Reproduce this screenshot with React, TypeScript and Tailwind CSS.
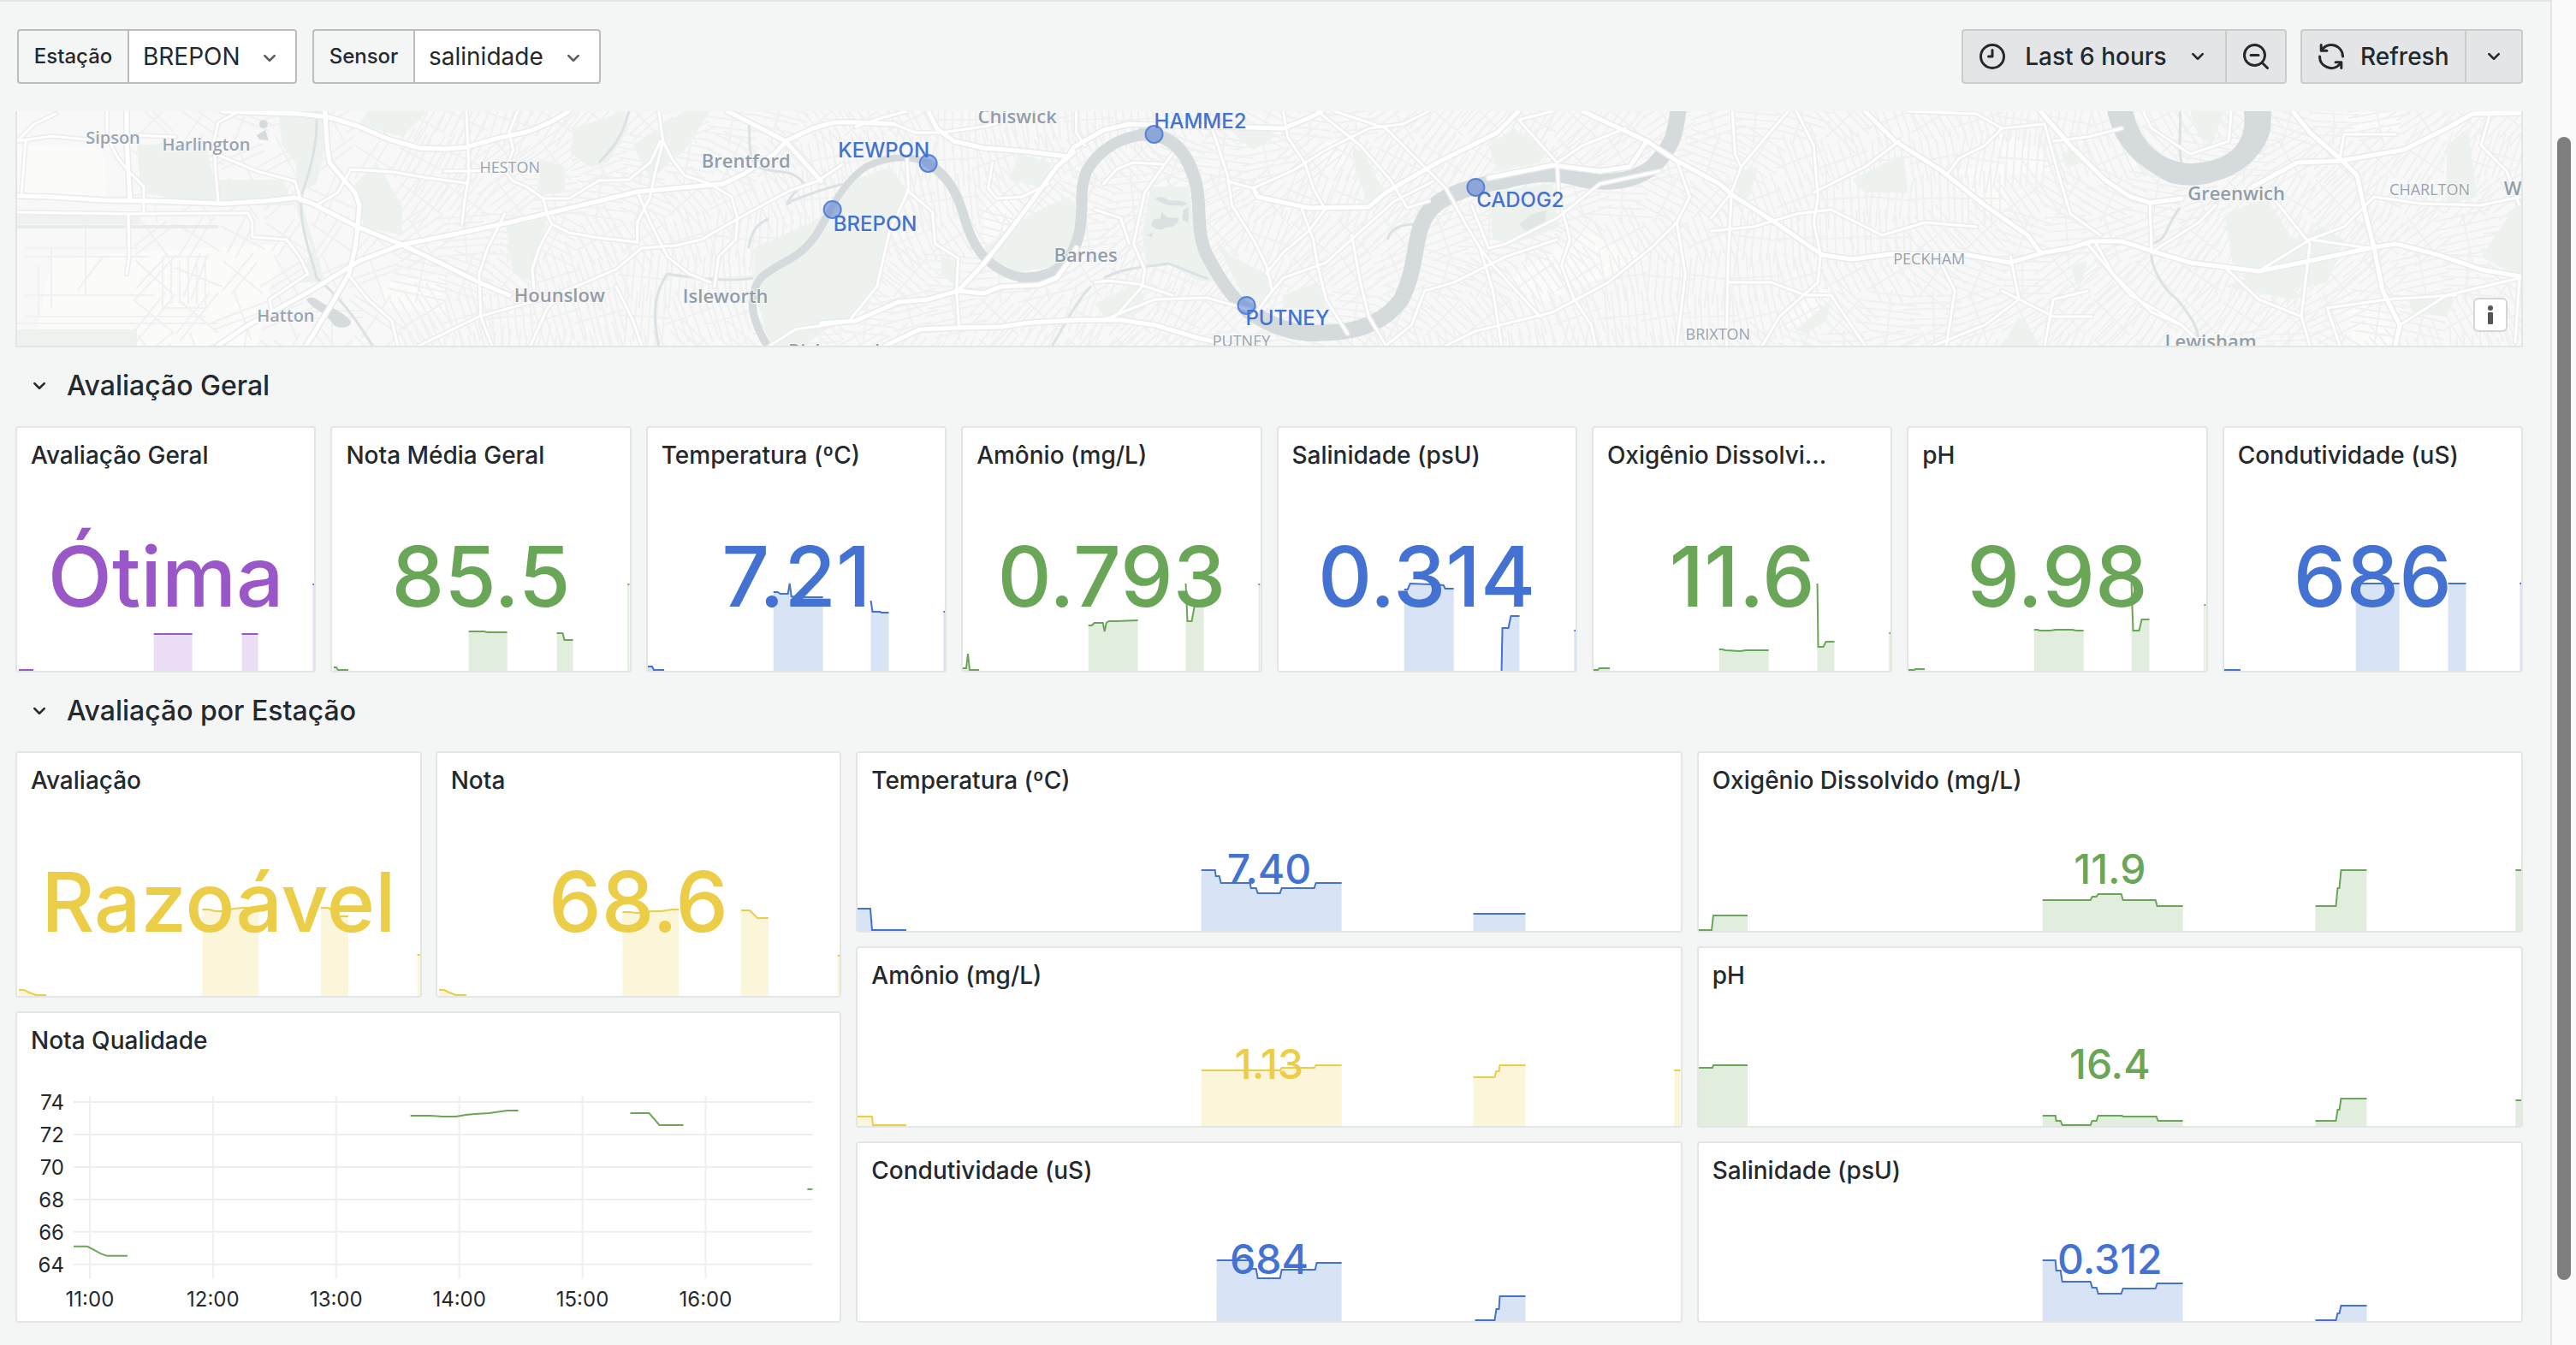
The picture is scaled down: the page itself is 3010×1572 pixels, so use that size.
import type { ReactNode } from 'react';

type Tone = 'blue' | 'green' | 'yellow' | 'purple';
type Point = [number, number];

const TONES: Record<Tone, { line: string; fill: string; text: string }> = {
  blue: { line: '#4472d2', fill: '#d8e3f5', text: 'text-[#4472d2]' },
  green: { line: '#6aa658', fill: '#e1eddd', text: 'text-[#6aa658]' },
  yellow: { line: '#ebcd48', fill: '#fbf5da', text: 'text-[#ebcd48]' },
  purple: { line: '#9a57c8', fill: '#ebddf4', text: 'text-[#9a57c8]' },
};

/* ---------- icons ---------- */

const ICONS = {
  angleDown:
    'M17,9.17a1,1,0,0,0-1.41,0L12,12.71,8.46,9.17a1,1,0,0,0-1.41,0,1,1,0,0,0,0,1.42l4.24,4.24a1,1,0,0,0,1.42,0L17,10.59A1,1,0,0,0,17,9.17Z',
  clock:
    'M12,2A10,10,0,1,0,22,12,10,10,0,0,0,12,2Zm0,18a8,8,0,1,1,8-8A8,8,0,0,1,12,20ZM12,6a1,1,0,0,0-1,1v4H9a1,1,0,0,0,0,2h3a1,1,0,0,0,1-1V7A1,1,0,0,0,12,6Z',
  zoomOut:
    'M21.71,20.29,18,16.61A9,9,0,1,0,16.61,18l3.68,3.68a1,1,0,0,0,1.42,0A1,1,0,0,0,21.71,20.29ZM11,18a7,7,0,1,1,7-7A7,7,0,0,1,11,18ZM14,10H8a1,1,0,0,0,0,2h6a1,1,0,0,0,0-2Z',
  sync: 'M19.91,15.51H15.38a1,1,0,0,0,0,2h2.4A8,8,0,0,1,4,12a1,1,0,0,0-2,0,10,10,0,0,0,16.88,7.23V21a1,1,0,0,0,2,0V16.5A1,1,0,0,0,19.91,15.51ZM12,2A10,10,0,0,0,5.12,4.77V3a1,1,0,0,0-2,0V7.5a1,1,0,0,0,1,1h4.5a1,1,0,0,0,0-2H6.22A8,8,0,0,1,20,12a1,1,0,0,0,2,0A10,10,0,0,0,12,2Z',
};

function Icon({ name, className }: { name: keyof typeof ICONS; className: string }) {
  return (
    <svg viewBox="0 0 24 24" fill="currentColor" aria-hidden="true" className={`shrink-0 ${className}`}>
      <path d={ICONS[name]} />
    </svg>
  );
}

/* ---------- toolbar ---------- */

interface VariableProps {
  id: string;
  label: string;
  options: string[];
  labelWidth: string;
  width: string;
}

function Variable({ id, label, options, labelWidth, width }: VariableProps) {
  return (
    <div className="flex h-16">
      <label
        htmlFor={id}
        className={`${labelWidth} flex items-center justify-center rounded-l-[4px] border-2 border-r-0 border-[#bcbebe] text-[24px] font-medium`}
      >
        {label}
      </label>
      <div className="relative flex">
        <select
          id={id}
          className={`${width} appearance-none rounded-r-[4px] border-2 border-[#bcbebe] bg-white pl-4 text-[28px] text-[#24292e]`}
        >
          {options.map((o) => (
            <option key={o}>{o}</option>
          ))}
        </select>
        <Icon name="angleDown" className="pointer-events-none absolute top-[18px] right-4 size-8 text-[#5a5e62]" />
      </div>
    </div>
  );
}

function ToolButton({ children, className, label }: { children: ReactNode; className: string; label?: string }) {
  return (
    <button
      type="button"
      aria-label={label}
      className={`flex h-16 items-center border-2 border-[#cbcdcd] bg-[#e4e5e6] text-[28px] font-medium ${className}`}
    >
      {children}
    </button>
  );
}

function Toolbar() {
  return (
    <div className="flex items-center justify-between pt-8 pb-8">
      <div className="flex gap-[18px] pl-[2px]">
        <Variable
          id="estacao"
          label="Estação"
          options={['BREPON', 'KEWPON', 'PUTNEY']}
          labelWidth="w-[129px]"
          width="w-[198px]"
        />
        <Variable
          id="sensor"
          label="Sensor"
          options={['salinidade', 'temperatura']}
          labelWidth="w-[118px]"
          width="w-[219px]"
        />
      </div>
      <div className="flex gap-4">
        <div className="flex">
          <ToolButton className="w-[308px] justify-between rounded-l-[4px] border-r-0 px-4">
            <Icon name="clock" className="size-9" />
            Last 6 hours
            <Icon name="angleDown" className="size-8" />
          </ToolButton>
          <ToolButton className="w-[72px] justify-center rounded-r-[4px]" label="Zoom out">
            <Icon name="zoomOut" className="size-9" />
          </ToolButton>
        </div>
        <div className="flex">
          <ToolButton className="w-[192px] gap-4 rounded-l-[4px] border-r-0 px-4">
            <Icon name="sync" className="size-9" />
            Refresh
          </ToolButton>
          <ToolButton className="w-[68px] justify-center rounded-r-[4px]" label="Refresh interval">
            <Icon name="angleDown" className="size-8" />
          </ToolButton>
        </div>
      </div>
    </div>
  );
}

/* ---------- map ---------- */

const MAJOR_ROADS = [
  '260,130 350,133 385,137 420,148 455,163 490,173 520,174 545,172 580,162 620,153 645,142 665,130',
  '20,229 60,230 120,234 180,235 260,238 310,235 345,231 365,238 420,266 470,286 520,310 560,330 595,345',
  '255,404 290,380 360,342 420,305 470,286 530,274 600,259 650,247 700,235 745,224 800,219 845,215 870,203 905,180 920,164 950,150 975,143 1000,143 1045,145',
  '380,130 382,165 385,190 400,208 415,225 420,240 418,266 415,290 408,320 385,360 358,404',
  '850,130 880,145 905,158 918,165 945,195 960,212',
  '148,130 148,165 150,200 152,233',
  '1085,130 1095,150 1115,165 1150,173 1200,177 1248,183 1255,172 1290,152 1320,145 1380,147 1420,148 1500,150 1530,138 1545,130',
  '960,378 1000,375 1050,353 1085,350 1120,340 1150,343 1170,335 1215,333 1235,325 1250,305 1258,290',
  '1120,340 1150,308 1180,270 1210,230 1235,195 1255,178',
  '1035,404 1075,385 1120,383 1170,382 1205,377 1260,374 1310,374 1350,380 1400,395 1440,404',
  '1740,208 1815,193 1870,200 1905,195 1925,165',
  '1850,130 1925,165 1960,188 2010,215 2025,228 2075,260 2130,298 2165,303 2210,297 2300,298 2350,307 2390,295 2420,290 2445,282 2480,282 2520,295 2560,307 2600,312 2640,317 2690,307 2770,290 2800,285 2850,298 2900,315 2945,323',
  '2180,130 2215,165 2270,200 2320,240 2370,275 2385,295',
  '2385,130 2420,170 2460,210 2490,230 2513,237 2550,232',
  '2630,220 2685,190 2735,188 2810,175 2860,150 2890,133 2948,132',
  '2680,130 2700,155 2735,185 2755,205 2765,250 2775,290 2785,340 2805,380 2800,404',
  '1465,220 1470,230 1530,243 1600,242 1620,225 1680,190 1750,155 1775,130',
];

const MINOR_ROADS = [
  '125,130 125,160 138,185 150,200 168,218 168,248',
  '20,248 150,250 290,249 295,260 295,277 335,280 350,300 360,320 315,350 318,365',
  '280,130 255,143 250,165 252,200 255,235',
  '252,180 300,200 345,212 352,235',
  '20,165 60,159 100,163 160,158 205,160',
  '20,165 40,145 65,133',
  '25,229 28,190 30,165',
  '150,250 151,300 148,320',
  '410,198 460,201 500,208 545,214',
  '545,130 547,170 548,205 543,235 540,262',
  '605,130 595,155 600,175 590,200 600,212 615,218 635,232 640,252 645,262 630,290 622,315 625,345 645,355',
  '490,404 560,370 640,348 680,332 720,315 750,290 790,287 820,280 860,257 900,235 925,222 955,212 985,192',
  '770,130 775,165 785,185 800,205 830,215 855,230 862,255 860,280 840,300 835,335',
  '590,250 570,290 560,320 562,370 575,404',
  '520,200 545,200 600,198',
  '635,232 665,232 700,211 735,210 760,190 772,165',
  '645,262 665,272 700,278 745,283',
  '745,283 745,260 760,230 765,205 775,165',
  '745,224 760,260 780,300 805,320 830,330',
  '410,325 430,350 458,375 465,404',
  '750,404 740,375 720,335',
  '620,404 640,360 650,350',
  '410,198 395,225 370,240',
  '900,404 930,385 985,377',
  '1000,148 1030,138 1060,130',
  '1045,145 1070,155 1100,155 1150,148 1200,135',
  '1060,222 1090,248 1093,285 1120,302 1118,340 1121,382',
  '1060,185 1062,222 1040,270 1025,335 995,372',
  '1300,374 1335,335 1338,315 1325,285 1338,225 1370,180',
  '1258,130 1258,155 1268,170',
  '1160,190 1155,220 1165,232 1195,230 1225,215',
  '1290,215 1305,198 1325,190 1360,192',
  '1280,245 1310,255 1320,285',
  '1410,130 1420,160 1435,205 1440,240 1465,280 1480,310 1487,340 1465,370',
  '1435,212 1465,220 1510,200 1550,175 1600,150 1640,145 1670,130',
  '1540,130 1590,170 1625,210 1645,243 1670,235',
  '1560,130 1620,150 1660,190 1690,220 1715,265 1730,290 1745,340 1755,404',
  '1550,243 1530,270 1500,295 1480,320',
  '1487,340 1500,325 1550,307 1585,275 1630,235 1675,212',
  '1500,130 1505,160 1525,190 1535,220 1548,243',
  '1690,404 1725,387 1815,365 1880,330 1930,290 1960,260 1975,230 1960,188',
  '1815,130 1775,140 1820,190 1822,230 1830,260 1835,280 1825,310 1840,350 1860,380 1865,404',
  '1580,275 1590,330 1600,370 1620,404',
  '1520,240 1535,280 1540,310 1550,350 1575,390',
  '1620,404 1650,380 1665,340 1700,330 1760,300 1820,280',
  '1730,290 1745,310 1800,370',
  '1960,260 1970,320 1960,404',
  '1900,150 1850,170 1820,190',
  '1290,374 1350,350 1410,348 1460,362',
  '1280,330 1295,328 1330,332 1370,345',
  '1720,240 1740,290 1760,285 1820,255 1870,215 1940,200',
  '2024,225 2035,195 2060,165 2090,130',
  '2025,130 2028,180 2035,195',
  '2000,255 2024,225 2020,300 2018,404',
  '2100,130 2120,170 2125,230 2120,260 2128,297 2125,330 2080,370 2060,404',
  '2230,130 2310,133 2340,150 2320,170 2290,185 2275,205',
  '2260,404 2320,380 2360,350 2350,300',
  '2513,237 2515,295 2530,285 2570,260 2590,240',
  '2440,285 2490,345 2550,380 2575,404',
  '2450,285 2470,320 2515,365 2550,380',
  '2120,225 2180,195 2220,165',
  '2000,270 2050,265 2100,250 2140,245 2200,275 2250,260 2310,265',
  '2020,330 2070,330 2110,345 2140,345 2180,404',
  '2270,310 2285,340 2275,404',
  '2340,340 2400,370 2445,370',
  '2340,150 2390,145 2405,200 2420,250 2455,275',
  '2505,130 2515,150 2560,180 2605,165 2608,130',
  '2735,185 2740,157 2800,157',
  '2700,280 2740,265 2775,230 2830,238 2900,240 2945,230',
  '2600,312 2640,350 2690,370 2700,404',
  '2660,235 2700,285 2690,370',
  '2640,317 2700,280 2770,290',
  '2805,380 2860,345 2945,325',
  '2735,404 2720,360 2790,350 2870,345',
  '2910,135 2900,170 2930,200 2945,240',
  '2940,400 2945,325',
  '2480,150 2440,160 2400,165',
  '2390,404 2400,350 2440,340',
];

const PARKS = [
  '325,130 378,130 380,170 370,215 350,225 345,190 330,170',
  '160,170 240,165 250,210 330,210 345,240 250,240 165,225',
  '20,250 160,250 165,262 20,262',
  '20,385 160,385 160,404 20,404',
  '345,232 352,235 380,330 350,330 365,290 350,255',
  '415,215 440,190 470,240 470,275 425,265',
  '430,130 500,130 470,160 420,145',
  '630,185 660,195 660,225 630,228',
  '670,150 730,130 735,150 710,190 690,195 668,180',
  '740,170 800,130 830,130 800,175 760,210',
  '590,255 640,250 625,330 600,320',
  '880,290 960,255 1000,210 1040,195 1058,220 1040,270 1025,335 990,375 920,404 900,404 885,350',
  '960,250 990,245 1000,260 1005,330 985,370 940,404 905,404 900,330 930,300',
  '1150,290 1215,245 1250,230 1262,250 1258,290 1230,312 1190,318 1165,305',
  '1100,300 1120,305 1118,335 1100,320',
  '1190,180 1230,190 1220,220 1180,210',
  '1345,218 1390,218 1398,290 1425,330 1400,328 1370,310 1340,310 1335,275',
  '1280,355 1330,330 1340,360 1300,380',
  '1420,280 1440,300 1480,320 1485,355 1455,350',
  '1500,345 1540,330 1550,360 1500,360',
  '1580,170 1595,180 1620,230 1600,240 1585,200',
  '1740,225 1815,215 1822,265 1770,285 1745,280',
  '1740,170 1770,150 1810,175 1800,190 1750,200',
  '1440,155 1470,145 1490,160 1465,175',
  '2165,210 2225,180 2230,225 2180,225',
  '2030,200 2055,195 2045,230 2030,235',
  '2600,250 2650,232 2680,280 2715,265 2740,280 2720,330 2650,345 2610,310',
  '2600,335 2640,320 2690,345 2680,350',
  '2860,170 2885,150 2895,230 2860,240',
  '2900,300 2948,230 2948,325',
  '2340,404 2360,370 2385,404',
  '2420,310 2440,305 2430,340',
  '2815,350 2870,345 2860,370 2820,365',
  '2410,180 2430,170 2435,190 2415,196',
  '2560,130 2600,130 2585,170 2570,160',
  '2100,385 2140,350 2135,375 2110,390',
];

const OPEN_LAND = [
  '20,170 120,172 125,228 22,226',
  '60,300 330,285 300,404 40,404',
  '440,330 520,320 520,365 450,360',
  '1150,240 1195,230 1175,270 1150,285',
  '1850,270 1930,300 1790,360 1760,330',
  '1540,170 1570,160 1575,190 1550,200',
  '2280,200 2340,190 2350,245 2300,235',
  '2330,150 2390,180 2400,200 2350,205',
  '2740,132 2805,132 2805,155 2742,155',
  '2110,350 2140,330 2130,370 2080,385',
  '2740,340 2790,370 2800,404 2750,404',
  '2480,150 2500,150 2510,180 2490,200',
];

const RIVERS: { w: number; d: string }[] = [
  { w: 9, d: 'M898 406C885 385 878 365 880 350C882 325 892 320 925 302C945 290 955 275 965 255' },
  { w: 8, d: 'M962 262C975 235 990 210 1012 195C1030 186 1060 178 1085 191' },
  { w: 11, d: 'M1085 191C1108 205 1118 225 1126 250C1135 285 1150 310 1185 322C1205 328 1225 325 1238 316' },
  { w: 13, d: 'M1195 325C1240 326 1254 300 1261 275C1268 245 1260 225 1270 200C1282 180 1305 157 1349 157' },
  { w: 15, d: 'M1335 157C1375 156 1390 185 1398 215C1404 240 1398 270 1410 297C1425 325 1440 350 1462 366' },
  { w: 19, d: 'M1458 362C1490 385 1520 392 1550 389C1590 388 1620 375 1638 350C1660 305 1650 270 1672 245C1690 225 1725 217 1760 211C1800 200 1825 202 1850 210C1880 215 1910 212 1932 195C1955 170 1958 160 1962 126' },
];

const STREAMS = [
  'M370 130C372 170 362 200 352 230C350 270 365 300 370 325C395 345 415 370 435 404',
  'M735 130C728 160 715 175 700 190',
  'M780 320C760 350 765 380 770 404',
  'M780 320C810 325 850 330 880 325',
  'M875 140C878 160 872 180 885 195C910 205 925 195 940 215C920 232 915 245 925 235C950 225 965 220 985 215',
  'M875 290C878 270 885 262 898 256',
  'M1290 325C1320 310 1350 312 1365 308C1385 315 1400 322 1412 326',
  'M1230 404C1250 370 1260 350 1275 335',
  'M1622 280C1625 265 1640 262 1655 262',
  'M2548 243C2530 265 2535 280 2515 285C2510 310 2530 340 2545 350C2560 370 2570 380 2570 404',
  'M2548 130C2550 150 2545 175 2550 190',
];

const PLACES: { x: number; y: number; t: string; s: 'lg' | 'md' | 'caps' }[] = [
  { x: 132, y: 168, t: 'Sipson', s: 'md' },
  { x: 241, y: 176, t: 'Harlington', s: 'md' },
  { x: 334, y: 376, t: 'Hatton', s: 'md' },
  { x: 596, y: 202, t: 'HESTON', s: 'caps' },
  { x: 872, y: 196, t: 'Brentford', s: 'lg' },
  { x: 654, y: 353, t: 'Hounslow', s: 'lg' },
  { x: 848, y: 354, t: 'Isleworth', s: 'lg' },
  { x: 975, y: 418, t: 'Richmond', s: 'lg' },
  { x: 1189, y: 144, t: 'Chiswick', s: 'lg' },
  { x: 1269, y: 306, t: 'Barnes', s: 'lg' },
  { x: 1451, y: 405, t: 'PUTNEY', s: 'caps' },
  { x: 1879, y: 418, t: 'CLAPHAM', s: 'caps' },
  { x: 2008, y: 397, t: 'BRIXTON', s: 'caps' },
  { x: 2255, y: 309, t: 'PECKHAM', s: 'caps' },
  { x: 2614, y: 234, t: 'Greenwich', s: 'lg' },
  { x: 2840, y: 228, t: 'CHARLTON', s: 'caps' },
  { x: 2978, y: 228, t: 'Woolwich', s: 'lg' },
  { x: 2584, y: 407, t: 'Lewisham', s: 'lg' },
];

const PLACE_STYLE = {
  lg: 'fill-[#929daa] text-[22px] font-semibold',
  md: 'fill-[#9aa4b0] text-[20px] font-semibold',
  caps: 'fill-[#98a2ae] text-[18px] font-normal',
};

const STATIONS = [
  { name: 'KEWPON', cx: 1085, cy: 191, x: 1033, y: 184 },
  { name: 'BREPON', cx: 973, cy: 245, x: 1023, y: 270 },
  { name: 'HAMME2', cx: 1349, cy: 157, x: 1403, y: 150 },
  { name: 'CADOG2', cx: 1725, cy: 219, x: 1777, y: 242 },
  { name: 'PUTNEY', cx: 1457, cy: 357, x: 1505, y: 380 },
];

/** Residential street mesh: short blocks whose direction drifts across the map. */
function streetMesh(): string {
  let seed = 7;
  const rnd = () => {
    seed = (seed * 16807) % 2147483647;
    return seed / 2147483647;
  };
  const out: string[] = [];
  for (let cx = 180; cx < 2960; cx += 52) {
    for (let cy = 140; cy < 420; cy += 46) {
      const a = Math.sin(cx / 190 + cy / 90) * 1.3 + rnd() * 0.5;
      const dx = Math.cos(a);
      const dy = Math.sin(a);
      const n = cx < 480 ? 2 : 6;
      for (let i = 0; i < n; i++) {
        const o = (i - n / 2) * 9 + rnd() * 3;
        const l = 22 + rnd() * 16;
        const px = cx - dy * o;
        const py = cy + dx * o;
        out.push(
          `M${(px - dx * l).toFixed(0)} ${(py - dy * l).toFixed(0)}L${(px + dx * l).toFixed(0)} ${(py + dy * l).toFixed(0)}`,
        );
      }
      out.push(
        `M${(cx - dy * 30).toFixed(0)} ${(cy + dx * 30).toFixed(0)}L${(cx + dy * 30).toFixed(0)} ${(cy - dx * 30).toFixed(0)}`,
      );
    }
  }
  return out.join('');
}

const MESH = streetMesh();

function StationMap() {
  return (
    <section
      aria-label="Mapa das estações"
      className="relative overflow-hidden border-2 border-t-0 border-[#e4e6e6] bg-[#f8f9f8]"
    >
      <svg viewBox="20 130 2927 274" className="block w-full" role="img" aria-label="Estações no rio Tâmisa">
        <rect x="0" y="100" width="3010" height="340" fill="#f7f8f7" />
        {OPEN_LAND.map((p) => (
          <polygon key={p} points={p} fill="#fbfbfa" />
        ))}
        <path d={MESH} stroke="#eff0f0" strokeWidth="2" fill="none" />
        {PARKS.map((p) => (
          <polygon key={p} points={p} fill="#edf2ee" />
        ))}
        <g stroke="#f0f1f1" strokeWidth="2" fill="none">
          <path d="M30 290H160M30 300H175M45 310V370M60 290V360M190 300V360H240V300ZM200 305V355M210 305V355M220 305V355M230 305V355M30 345H180M30 370H240M20 378H255M100 262V345M120 300L90 340M20 395H150" />
          <path d="M20 265H255" stroke="#e9ebea" strokeWidth="4" />
        </g>
        <g fill="none" stroke="#dbe1e4" strokeWidth="3">
          {STREAMS.map((d) => (
            <path key={d} d={d} />
          ))}
        </g>
        <g fill="#d6dbdd">
          <path d="M358 350C365 345 370 350 378 355C390 360 400 365 410 375C412 382 398 386 390 380C382 365 365 362 358 350Z" />
          <ellipse cx="308" cy="145" rx="5" ry="5" />
          <path d="M300 158L310 152L314 164L303 163Z" />
          <path
            d="M1350 232Q1358 228 1366 234Q1378 234 1387 237Q1386 242 1376 240Q1362 242 1350 232ZM1346 260Q1350 254 1356 256L1358 248L1364 254L1378 255Q1376 266 1362 266Q1356 272 1346 264ZM1383 246L1389 242L1389 260L1382 257ZM1340 275L1348 272L1346 277Z"
            opacity="0.8"
          />
          <path d="M1776 262L1790 250L1808 246L1806 262L1785 272Z" opacity="0.5" />
        </g>
        <g fill="none" stroke="#d5dadd" strokeLinecap="round">
          {RIVERS.map((r) => (
            <path key={r.d} d={r.d} strokeWidth={r.w} />
          ))}
        </g>
        <path
          d="M2462 126C2470 165 2490 190 2535 213C2548 218 2575 218 2592 211C2625 203 2650 175 2654 150L2655 126H2622C2628 160 2615 188 2562 191C2525 190 2500 165 2492 126Z"
          fill="#d5dadd"
        />
        <g fill="none" strokeLinejoin="round" strokeLinecap="round">
          <g stroke="#ebeceb" strokeWidth="6">
            {MINOR_ROADS.map((p) => (
              <polyline key={p} points={p} />
            ))}
          </g>
          <g stroke="#e9ebea" strokeWidth="8">
            {MAJOR_ROADS.map((p) => (
              <polyline key={p} points={p} />
            ))}
          </g>
          <g stroke="#ffffff" strokeWidth="3">
            {MINOR_ROADS.map((p) => (
              <polyline key={p} points={p} />
            ))}
          </g>
          <g stroke="#ffffff" strokeWidth="5">
            {MAJOR_ROADS.map((p) => (
              <polyline key={p} points={p} />
            ))}
          </g>
        </g>
        <g textAnchor="middle" fontFamily="'Open Sans', sans-serif" stroke="#f8f9f8" strokeWidth="2" paintOrder="stroke">
          {PLACES.map((p) => (
            <text key={p.t} x={p.x} y={p.y} className={PLACE_STYLE[p.s]}>
              {p.t}
            </text>
          ))}
        </g>
        {STATIONS.map((s) => (
          <g key={s.name}>
            <circle cx={s.cx} cy={s.cy} r="10" fill="#4472d2" fillOpacity="0.5" stroke="#5a82d6" strokeWidth="2" />
            <text x={s.x} y={s.y} textAnchor="middle" className="fill-[#4472d2] text-[24px] font-medium">
              {s.name}
            </text>
          </g>
        ))}
      </svg>
      <button
        type="button"
        aria-label="Atribuições"
        className="absolute right-4 bottom-4 flex size-10 items-center justify-center rounded-[6px] border-2 border-[#d4d6d6] bg-white text-[#555]"
      >
        <svg viewBox="0 0 8 24" className="h-6" fill="currentColor" aria-hidden="true">
          <circle cx="4" cy="4" r="3" />
          <rect x="1" y="9" width="6" height="14" rx="1" />
        </svg>
      </button>
    </section>
  );
}

/* ---------- panels ---------- */

function RowHeader({ title }: { title: string }) {
  return (
    <h2 className="flex h-[92px] items-center pb-0.5">
      <button type="button" aria-expanded="true" className="flex items-center gap-4 pl-3 text-[32px] font-medium">
        <Icon name="angleDown" className="size-8" />
        {title}
      </button>
    </h2>
  );
}

function Panel({ title, children, className = '' }: { title: string; children: ReactNode; className?: string }) {
  return (
    <section className={`flex min-w-0 flex-col rounded-[4px] border-2 border-[#e4e6e6] bg-white ${className}`}>
      <h3 className="h-16 shrink-0 px-4 text-[28px] leading-[64px] font-medium">
        <span className="block max-w-[272px] truncate group-data-[wide]/col:max-w-none">{title}</span>
      </h3>
      {children}
    </section>
  );
}

/** Points are [x, height above the panel's bottom edge]. */
function Sparkline({ segments, width, height, tone }: { segments: Point[][]; width: number; height: number; tone: Tone }) {
  return (
    <svg
      viewBox={`0 0 ${width} ${height}`}
      preserveAspectRatio="none"
      aria-hidden="true"
      className="absolute inset-x-0 bottom-0 w-full"
      style={{ height }}
    >
      {segments.map((seg, i) => {
        const pts = seg.map(([x, h]) => `${x},${height - h}`).join(' ');
        return (
          <g key={i}>
            <polygon
              points={`${seg[0][0]},${height} ${pts} ${seg[seg.length - 1][0]},${height}`}
              fill={TONES[tone].fill}
            />
            <polyline
              points={pts}
              fill="none"
              stroke={TONES[tone].line}
              strokeWidth="2"
              vectorEffect="non-scaling-stroke"
            />
          </g>
        );
      })}
    </svg>
  );
}

interface Stat {
  title: string;
  value: string;
  tone: Tone;
  segments: Point[][];
}

function StatPanel({ stat, width, size, className }: { stat: Stat; width: number; size: string; className: string }) {
  return (
    <Panel title={stat.title} className={className}>
      <div className="relative flex flex-1 items-center justify-center">
        <Sparkline segments={stat.segments} width={width} height={104} tone={stat.tone} />
        <span className={`relative font-medium ${size} ${TONES[stat.tone].text}`}>{stat.value}</span>
      </div>
    </Panel>
  );
}

const GENERAL: Stat[] = [
  {
    title: 'Avaliação Geral',
    value: 'Ótima',
    tone: 'purple',
    segments: [[[2, 1], [19, 1]], [[160, 43], [205, 43]], [[263, 43], [282, 43]], [[346, 101], [348, 101]]],
  },
  {
    title: 'Nota Média Geral',
    value: '85.5',
    tone: 'green',
    segments: [
      [[2, 4], [5, 4], [7, 1], [19, 1]],
      [[160, 46], [178, 46], [182, 45], [205, 45]],
      [[263, 44], [270, 44], [272, 36], [282, 36]],
      [[346, 101], [348, 101]],
    ],
  },
  {
    title: 'Temperatura (ºC)',
    value: '7.21',
    tone: 'blue',
    segments: [
      [[0, 5], [5, 5], [7, 1], [19, 1]],
      [[147, 92], [152, 92], [155, 90], [164, 90], [166, 102], [168, 87], [175, 86], [205, 86]],
      [[261, 82], [263, 69], [272, 69], [273, 68], [282, 68]],
      [[346, 69], [348, 69]],
    ],
  },
  {
    title: 'Amônio (mg/L)',
    value: '0.793',
    tone: 'green',
    segments: [
      [[0, 3], [4, 3], [6, 20], [8, 1], [19, 1]],
      [[147, 53], [151, 53], [154, 56], [164, 56], [166, 46], [168, 56], [171, 58], [180, 58], [205, 59]],
      [[261, 102], [262, 80], [263, 58], [268, 58], [272, 80], [282, 80]],
      [[346, 101], [348, 101]],
    ],
  },
  {
    title: 'Salinidade (psU)',
    value: '0.314',
    tone: 'blue',
    segments: [
      [[147, 95], [151, 95], [154, 102], [178, 101], [193, 100], [195, 96], [205, 96]],
      [[261, 0], [262, 50], [269, 50], [272, 64], [282, 64]],
      [[346, 47], [348, 47]],
    ],
  },
  {
    title: 'Oxigênio Dissolvido (mg/L)',
    value: '11.6',
    tone: 'green',
    segments: [
      [[0, 1], [5, 1], [7, 3], [19, 3]],
      [[147, 25], [151, 25], [154, 24], [172, 23], [178, 24], [205, 24]],
      [[262, 102], [263, 28], [269, 28], [272, 34], [282, 34]],
      [[346, 44], [348, 44]],
    ],
  },
  {
    title: 'pH',
    value: '9.98',
    tone: 'green',
    segments: [
      [[0, 1], [7, 1], [8, 2], [19, 2]],
      [[147, 48], [151, 48], [154, 47], [166, 47], [172, 48], [192, 48], [196, 47], [205, 47]],
      [[261, 102], [263, 47], [270, 47], [273, 60], [282, 60]],
      [[346, 77], [348, 77]],
    ],
  },
  {
    title: 'Condutividade (uS)',
    value: '686',
    tone: 'blue',
    segments: [[[0, 1], [19, 1]], [[154, 102], [205, 102]], [[262, 102], [283, 102]], [[346, 102], [348, 102]]],
  },
];

const STATION_SCORE: (Stat & { size: string })[] = [
  {
    title: 'Avaliação',
    value: 'Razoável',
    tone: 'yellow',
    size: 'text-[96px]',
    segments: [
      [[2, 7], [8, 7], [14, 4], [22, 1], [34, 1]],
      [[217, 101], [225, 101], [232, 99], [242, 99], [247, 101], [255, 102], [263, 103], [283, 103]],
      [[356, 103], [365, 103], [375, 93], [388, 93]],
      [[469, 48], [472, 48]],
    ],
  },
  {
    title: 'Nota',
    value: '68.6',
    tone: 'yellow',
    size: 'text-[98px]',
    segments: [
      [[2, 7], [8, 7], [14, 4], [22, 1], [34, 1]],
      [[217, 98], [225, 98], [233, 97], [243, 97], [250, 99], [262, 99], [275, 101], [283, 101]],
      [[356, 100], [366, 100], [375, 91], [388, 91]],
      [[469, 47], [472, 47]],
    ],
  },
];

const STATION_STATS: Stat[] = [
  {
    title: 'Temperatura (ºC)',
    value: '7.40',
    tone: 'blue',
    segments: [
      [[0, 26], [15, 26], [17, 1], [57, 1]],
      [[402, 71], [418, 71], [419, 64], [423, 64], [425, 56], [459, 56], [460, 50], [466, 50], [468, 44], [494, 44], [496, 50], [534, 50], [536, 56], [566, 56]],
      [[720, 20], [781, 20]],
    ],
  },
  {
    title: 'Oxigênio Dissolvido (mg/L)',
    value: '11.9',
    tone: 'green',
    segments: [
      [[0, 1], [15, 1], [17, 18], [57, 18]],
      [[402, 36], [458, 36], [460, 40], [465, 40], [467, 43], [494, 43], [496, 36], [534, 36], [536, 29], [566, 29]],
      [[721, 29], [745, 29], [747, 50], [749, 50], [751, 71], [781, 71]],
      [[955, 71], [962, 71]],
    ],
  },
  {
    title: 'Amônio (mg/L)',
    value: '1.13',
    tone: 'yellow',
    segments: [
      [[0, 11], [17, 11], [18, 1], [57, 1]],
      [[402, 65], [494, 65], [496, 68], [534, 68], [536, 71], [566, 71]],
      [[720, 57], [745, 57], [747, 64], [750, 64], [751, 71], [781, 71]],
      [[955, 65], [962, 65]],
    ],
  },
  {
    title: 'pH',
    value: '16.4',
    tone: 'green',
    segments: [
      [[0, 68], [16, 68], [17, 71], [57, 71]],
      [[402, 12], [417, 12], [418, 6], [423, 6], [425, 1], [458, 1], [460, 6], [465, 6], [467, 12], [495, 12], [496, 11], [535, 11], [537, 6], [566, 6]],
      [[721, 6], [745, 6], [747, 19], [749, 19], [751, 32], [781, 32]],
      [[955, 30], [962, 30]],
    ],
  },
  {
    title: 'Condutividade (uS)',
    value: '684',
    tone: 'blue',
    segments: [
      [[420, 71], [459, 71], [460, 61], [466, 61], [468, 50], [494, 50], [496, 60], [535, 60], [537, 68], [566, 68]],
      [[722, 1], [745, 1], [747, 14], [750, 14], [751, 29], [781, 29]],
    ],
  },
  {
    title: 'Salinidade (psU)',
    value: '0.312',
    tone: 'blue',
    segments: [
      [[402, 71], [417, 71], [418, 59], [423, 59], [425, 46], [458, 46], [460, 39], [465, 39], [467, 32], [494, 32], [496, 38], [534, 38], [536, 44], [566, 44]],
      [[721, 1], [745, 1], [747, 9], [749, 9], [751, 18], [781, 18]],
    ],
  },
];

const QUALITY_SERIES = [
  '66,209 82,209 90,213 97,217 105,220 129,220',
  '460,56 483,56 497,57 513,57 525,55 535,54 552,53 573,50 586,50',
  '717,53 739,53 751,67 779,67',
  '924,142 930,142',
];

function QualityChart() {
  const values = [74, 72, 70, 68, 66, 64];
  const hours = ['11:00', '12:00', '13:00', '14:00', '15:00', '16:00'];
  return (
    <svg viewBox="0 0 962 296" className="block w-full" role="img" aria-label="Nota Qualidade por hora">
      {values.map((v, i) => (
        <g key={v}>
          <path d={`M66 ${40 + i * 38}H930`} stroke="#eeefef" strokeWidth="2" />
          <text x="55" y={49 + i * 38} textAnchor="end" className="fill-[#24292e] text-[24px]">
            {v}
          </text>
        </g>
      ))}
      {hours.map((h, i) => (
        <g key={h}>
          <path d={`M${85 + i * 144} 33V247`} stroke="#eeefef" strokeWidth="2" />
          <text x={85 + i * 144} y="279" textAnchor="middle" className="fill-[#24292e] text-[24px]">
            {h}
          </text>
        </g>
      ))}
      {QUALITY_SERIES.map((p) => (
        <polyline key={p} points={p} fill="none" stroke="#6aa658" strokeWidth="2" />
      ))}
    </svg>
  );
}

export default function App() {
  return (
    <div className="flex min-h-screen bg-[#f4f5f5] font-['Inter',sans-serif] text-[#24292e]">
      <main className="min-w-0 flex-1 border-t-2 border-[#e4e6e6] pr-8 pb-6 pl-[18px]">
        <Toolbar />
        <StationMap />

        <RowHeader title="Avaliação Geral" />
        <div className="group/col grid grid-cols-8 gap-[17px]">
          {GENERAL.map((s) => (
            <StatPanel key={s.title} stat={s} width={348} size="text-[98px] leading-[120px]" className="h-[288px]" />
          ))}
        </div>

        <RowHeader title="Avaliação por Estação" />
        <div data-wide className="group/col grid grid-cols-3 gap-[17px]">
          <div className="flex min-w-0 flex-col gap-4">
            <div className="grid grid-cols-2 gap-4">
              {STATION_SCORE.map((s) => (
                <StatPanel key={s.title} stat={s} width={472} size={`leading-[120px] ${s.size}`} className="h-[288px]" />
              ))}
            </div>
            <Panel title="Nota Qualidade" className="flex-1">
              <QualityChart />
            </Panel>
          </div>
          <div className="col-span-2 grid grid-cols-2 gap-x-[17px] gap-y-4">
            {STATION_STATS.map((s) => (
              <StatPanel key={s.title} stat={s} width={962} size="text-[48px] leading-[60px]" className="h-[212px]" />
            ))}
          </div>
        </div>
      </main>
      <div
        className="flex w-[30px] flex-col items-center border-l-2 border-[#e4e6e6] bg-[#fafafa] pt-40 pb-[76px]"
        aria-hidden="true"
      >
        <div className="w-4 flex-1 rounded-full bg-[#7e7e7e]" />
      </div>
    </div>
  );
}
